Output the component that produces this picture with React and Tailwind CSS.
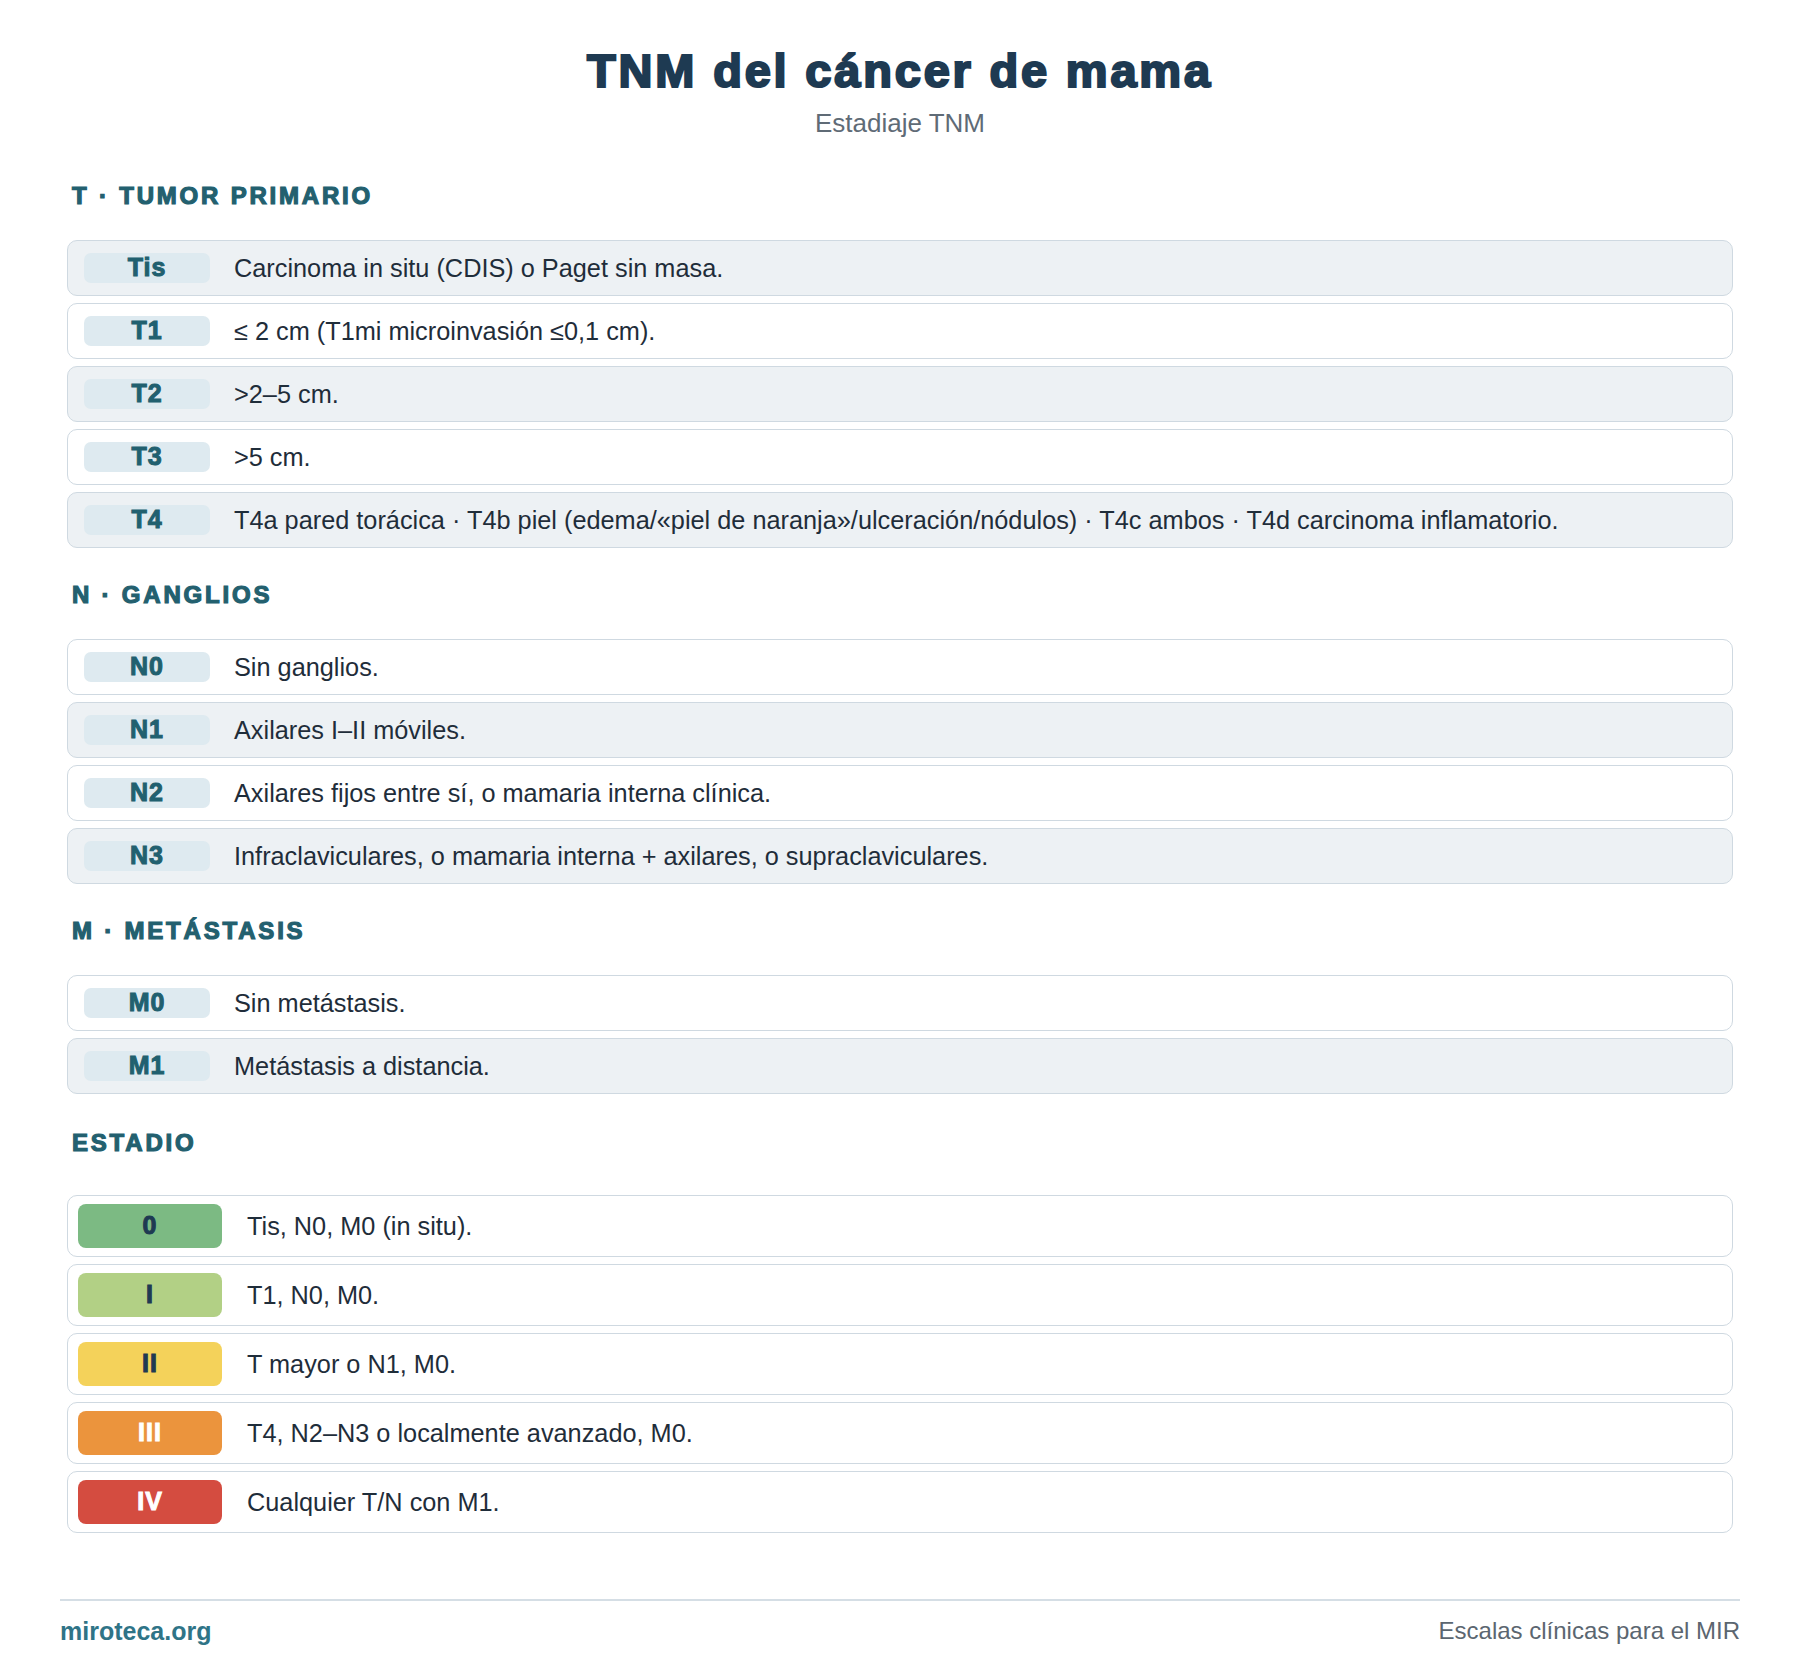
import React from 'react';

const sections = [
  {
    title: 'T · TUMOR PRIMARIO',
    rows: [
      ['Tis', 'Carcinoma in situ (CDIS) o Paget sin masa.'],
      ['T1', '≤ 2 cm (T1mi microinvasión ≤0,1 cm).'],
      ['T2', '>2–5 cm.'],
      ['T3', '>5 cm.'],
      ['T4', 'T4a pared torácica · T4b piel (edema/«piel de naranja»/ulceración/nódulos) · T4c ambos · T4d carcinoma inflamatorio.'],
    ],
  },
  {
    title: 'N · GANGLIOS',
    rows: [
      ['N0', 'Sin ganglios.'],
      ['N1', 'Axilares I–II móviles.'],
      ['N2', 'Axilares fijos entre sí, o mamaria interna clínica.'],
      ['N3', 'Infraclaviculares, o mamaria interna + axilares, o supraclaviculares.'],
    ],
  },
  {
    title: 'M · METÁSTASIS',
    rows: [
      ['M0', 'Sin metástasis.'],
      ['M1', 'Metástasis a distancia.'],
    ],
  },
];

const stages = [
  { label: '0', text: 'Tis, N0, M0 (in situ).', badge: 'bg-[#7cba83] text-[#1e3a52]' },
  { label: 'I', text: 'T1, N0, M0.', badge: 'bg-[#b2d085] text-[#1e3a52]' },
  { label: 'II', text: 'T mayor o N1, M0.', badge: 'bg-[#f4d25a] text-[#1e3a52]' },
  { label: 'III', text: 'T4, N2–N3 o localmente avanzado, M0.', badge: 'bg-[#eb943d] text-white' },
  { label: 'IV', text: 'Cualquier T/N con M1.', badge: 'bg-[#d44c40] text-white' },
];

const heading = 'pl-[5px] text-[24px] leading-[28px] font-bold tracking-[2.8px] text-[#23606f] [-webkit-text-stroke:1.2px_#23606f]';

const Row = ({ code, text, shaded }) => (
  <div
    className={`flex items-center rounded-[10px] border border-[#cfd9e1] py-[12px] pl-[16px] pr-4 ${
      shaded ? 'bg-[#edf1f4]' : 'bg-white'
    }`}
  >
    <div className="flex h-[30px] w-[126px] shrink-0 items-center justify-center rounded-[7px] bg-[#deeaf0] text-[25px] font-bold tracking-[1px] text-[#21606f] [-webkit-text-stroke:1px_#21606f]">
      {code}
    </div>
    <div className="ml-[24px] text-[25.3px] leading-[30px] text-[#1f2d3a]">{text}</div>
  </div>
);

export default function App() {
  let idx = 0;
  return (
    <div className="min-h-screen bg-white px-[60px] pt-[43px] pb-[20px] font-['Liberation_Sans',Arial,sans-serif]">
      <h1 className="text-center text-[47px] leading-[56px] font-bold tracking-[2.8px] text-[#1e3a52] [-webkit-text-stroke:2.2px_#1e3a52]">
        TNM del cáncer de mama
      </h1>
      <div className="mt-[9px] text-center text-[26px] leading-[30px] text-[#5f6b76]">Estadiaje TNM</div>

      <div className="px-[7px]">
        {sections.map((s, si) => (
          <div key={s.title} className={si === 0 ? 'mt-[44px]' : 'mt-[33px]'}>
            <h2 className={heading}>{s.title}</h2>
            <div className="mt-[30px] flex flex-col gap-[7px]">
              {s.rows.map(([code, text]) => {
                const shaded = idx % 2 === 0;
                idx += 1;
                return <Row key={code} code={code} text={text} shaded={shaded} />;
              })}
            </div>
          </div>
        ))}

        <div className="mt-[35px]">
          <h2 className={heading}>ESTADIO</h2>
          <div className="mt-[38px] flex flex-col gap-[7px]">
            {stages.map((st) => (
              <div
                key={st.label}
                className="flex items-center rounded-[10px] border border-[#cfd9e1] bg-white py-[8px] pl-[10px] pr-4"
              >
                <div
                  className={`flex h-[44px] w-[144px] shrink-0 items-center justify-center rounded-[8px] text-[25px] font-bold tracking-[1px] [-webkit-text-stroke:1px_currentColor] ${st.badge}`}
                >
                  {st.label}
                </div>
                <div className="ml-[25px] text-[25.3px] leading-[30px] text-[#1f2d3a]">{st.text}</div>
              </div>
            ))}
          </div>
        </div>
      </div>

      <div className="mt-[66px] border-t-2 border-[#d5dee5] pt-[15px] flex items-center justify-between">
        <span className="text-[25px] leading-[30px] font-bold text-[#2f7487]">miroteca.org</span>
        <span className="text-[24px] leading-[30px] text-[#5b6670]">Escalas clínicas para el MIR</span>
      </div>
    </div>
  );
}
